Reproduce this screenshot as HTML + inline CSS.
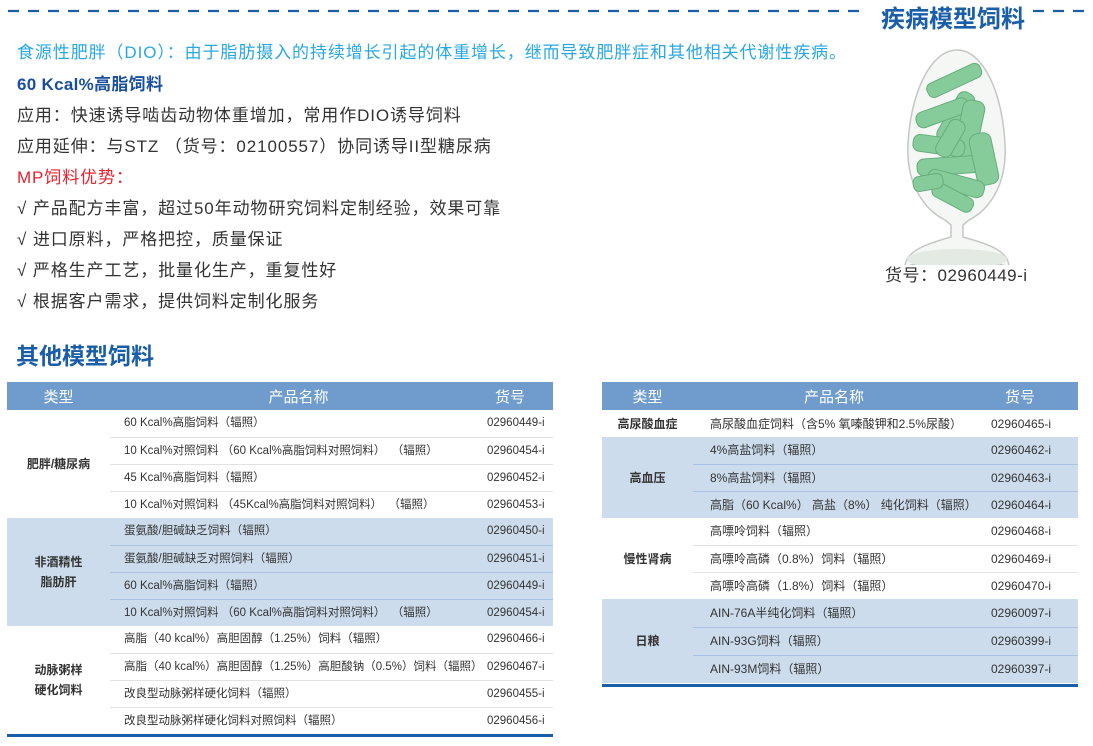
<!DOCTYPE html>
<html><head><meta charset="utf-8">
<style>
*{margin:0;padding:0;box-sizing:border-box}
body{width:1093px;height:746px;background:#fff;position:relative;overflow:hidden;font-family:"Liberation Sans","Noto Sans CJK SC",sans-serif;color:#333}
.a{position:absolute;white-space:nowrap}
.t{font-size:17px;line-height:20px;letter-spacing:0.9px}
table{position:absolute;border-collapse:collapse;table-layout:fixed;font-size:12px;color:#333}
th{background:#6f9ccd;color:#fff;font-weight:normal;font-size:15px;height:28px}
td{height:27px;padding:0;white-space:nowrap;vertical-align:middle;line-height:14px}
td.ty{text-align:center;font-weight:bold;font-size:12px;line-height:20px}
.b td{background:#cddcec}
.w td.s{border-bottom:1px solid #e2e2e2}
.b td.s{border-bottom:1px solid #a9c4e2}
#L{font-size:11.5px}
</style></head><body>
<svg class="a" style="left:0;top:0" width="1093" height="20"><line x1="8" y1="11" x2="868" y2="11" stroke="#1a5ea8" stroke-width="2.2" stroke-dasharray="11,9"/><line x1="1033" y1="11" x2="1085" y2="11" stroke="#1a5ea8" stroke-width="2.2" stroke-dasharray="11,9"/></svg>
<div class="a" style="left:881px;top:-1px;font-size:24px;font-weight:bold;color:#1a5ea8">疾病模型饲料</div>

<div class="a t" style="left:17px;top:43px;color:#29a8e0">食源性肥胖（DIO）：由于脂肪摄入的持续增长引起的体重增长，继而导致肥胖症和其他相关代谢性疾病。</div>
<div class="a t" style="left:17px;top:75px;color:#1a4f9c;font-weight:bold;letter-spacing:0.3px">60 Kcal%高脂饲料</div>
<div class="a t" style="left:17px;top:106px">应用：快速诱导啮齿动物体重增加，常用作DIO诱导饲料</div>
<div class="a t" style="left:17px;top:137px">应用延伸：与STZ （货号：02100557）协同诱导II型糖尿病</div>
<div class="a t" style="left:17px;top:168px;color:#e8202e">MP饲料优势：</div>
<div class="a t" style="left:17px;top:199px">√ 产品配方丰富，超过50年动物研究饲料定制经验，效果可靠</div>
<div class="a t" style="left:17px;top:230px">√ 进口原料，严格把控，质量保证</div>
<div class="a t" style="left:17px;top:261px">√ 严格生产工艺，批量化生产，重复性好</div>
<div class="a t" style="left:17px;top:292px">√ 根据客户需求，提供饲料定制化服务</div>
<div class="a" style="left:16px;top:337px;font-size:23px;font-weight:bold;color:#1a5ea8">其他模型饲料</div>

<svg class="a" style="left:895px;top:45px" width="125" height="220">
<path d="M62 5 C35 5 15 50 13 100 C11 140 30 165 50 175 L56 180 L56 192 C35 198 10 205 10 222 C30 214 94 214 114 222 C114 205 90 198 68 192 L68 180 L74 175 C94 165 112 140 110 100 C108 50 89 5 62 5Z" fill="#f5f7f5" stroke="#c4c8c4" stroke-width="1.5"/>
<ellipse cx="62" cy="214" rx="50" ry="10" fill="#e3e9e3"/>
<g fill="#86cc9a" stroke="#66ad7c" stroke-width="1">
<rect x="30" y="28" width="58" height="15" rx="6" transform="rotate(-25 59 35)"/>
<rect x="52" y="45" width="18" height="55" rx="7" transform="rotate(30 61 72)"/>
<rect x="20" y="60" width="55" height="16" rx="7" transform="rotate(-20 47 68)"/>
<rect x="62" y="55" width="22" height="72" rx="8" transform="rotate(12 73 91)"/>
<rect x="18" y="92" width="52" height="17" rx="7" transform="rotate(8 44 100)"/>
<rect x="35" y="85" width="40" height="17" rx="7" transform="rotate(-60 55 93)"/>
<rect x="22" y="112" width="72" height="17" rx="7" transform="rotate(-4 58 120)"/>
<rect x="78" y="88" width="22" height="52" rx="8" transform="rotate(-12 89 114)"/>
<rect x="32" y="130" width="58" height="17" rx="7" transform="rotate(15 61 138)"/>
<rect x="36" y="145" width="44" height="15" rx="6" transform="rotate(28 58 152)"/>
<rect x="18" y="130" width="30" height="15" rx="6" transform="rotate(-10 33 137)"/>
</g>
</svg>
<div class="a t" style="left:885px;top:266px;letter-spacing:0.5px">货号：02960449-i</div>

<table id="L" style="left:7px;top:382px;width:546px">
<colgroup><col style="width:103px"><col style="width:377px"><col style="width:66px"></colgroup>
<tr><th>类型</th><th>产品名称</th><th style="text-align:left;padding-left:8px">货号</th></tr>
<tbody class="w">
<tr><td class="ty" rowspan="4">肥胖/糖尿病</td><td class="s" style="padding-left:14px">60 Kcal%高脂饲料（辐照）</td><td class="s">02960449-i</td></tr>
<tr><td class="s" style="padding-left:14px">10 Kcal%对照饲料 （60 Kcal%高脂饲料对照饲料）&nbsp; （辐照）</td><td class="s">02960454-i</td></tr>
<tr><td class="s" style="padding-left:14px">45 Kcal%高脂饲料（辐照）</td><td class="s">02960452-i</td></tr>
<tr><td style="padding-left:14px">10 Kcal%对照饲料 （45Kcal%高脂饲料对照饲料）&nbsp; （辐照）</td><td>02960453-i</td></tr>
</tbody>
<tbody class="b">
<tr><td class="ty" rowspan="4">非酒精性<br>脂肪肝</td><td class="s" style="padding-left:14px">蛋氨酸/胆碱缺乏饲料（辐照）</td><td class="s">02960450-i</td></tr>
<tr><td class="s" style="padding-left:14px">蛋氨酸/胆碱缺乏对照饲料（辐照）</td><td class="s">02960451-i</td></tr>
<tr><td class="s" style="padding-left:14px">60 Kcal%高脂饲料（辐照）</td><td class="s">02960449-i</td></tr>
<tr><td style="padding-left:14px">10 Kcal%对照饲料 （60 Kcal%高脂饲料对照饲料）&nbsp; （辐照）</td><td>02960454-i</td></tr>
</tbody>
<tbody class="w">
<tr><td class="ty" rowspan="4">动脉粥样<br>硬化饲料</td><td class="s" style="padding-left:14px">高脂（40 kcal%）高胆固醇（1.25%）饲料（辐照）</td><td class="s">02960466-i</td></tr>
<tr><td class="s" style="padding-left:14px">高脂（40 kcal%）高胆固醇（1.25%）高胆酸钠（0.5%）饲料（辐照）</td><td class="s">02960467-i</td></tr>
<tr><td class="s" style="padding-left:14px">改良型动脉粥样硬化饲料（辐照）</td><td class="s">02960455-i</td></tr>
<tr><td style="padding-left:14px">改良型动脉粥样硬化饲料对照饲料（辐照）</td><td>02960456-i</td></tr>
</tbody>
</table>
<div class="a" style="left:7px;top:734px;width:546px;height:3px;background:#1a5ea8"></div>

<table style="left:602px;top:382px;width:476px">
<colgroup><col style="width:91px"><col style="width:282px"><col style="width:103px"></colgroup>
<tr><th>类型</th><th>产品名称</th><th style="text-align:left;padding-left:30px">货号</th></tr>
<tbody class="w"><tr><td class="ty">高尿酸血症</td><td style="padding-left:17px">高尿酸血症饲料（含5% 氧嗪酸钾和2.5%尿酸）</td><td style="padding-left:16px">02960465-i</td></tr></tbody>
<tbody class="b">
<tr><td class="ty" rowspan="3">高血压</td><td class="s" style="padding-left:17px">4%高盐饲料（辐照）</td><td class="s" style="padding-left:16px">02960462-i</td></tr>
<tr><td class="s" style="padding-left:17px">8%高盐饲料（辐照）</td><td class="s" style="padding-left:16px">02960463-i</td></tr>
<tr><td style="padding-left:17px">高脂（60 Kcal%） 高盐（8%） 纯化饲料（辐照）</td><td style="padding-left:16px">02960464-i</td></tr>
</tbody>
<tbody class="w">
<tr><td class="ty" rowspan="3">慢性肾病</td><td class="s" style="padding-left:17px">高嘌呤饲料（辐照）</td><td class="s" style="padding-left:16px">02960468-i</td></tr>
<tr><td class="s" style="padding-left:17px">高嘌呤高磷（0.8%）饲料（辐照）</td><td class="s" style="padding-left:16px">02960469-i</td></tr>
<tr><td style="padding-left:17px">高嘌呤高磷（1.8%）饲料（辐照）</td><td style="padding-left:16px">02960470-i</td></tr>
</tbody>
<tbody class="b">
<tr><td class="ty" rowspan="3">日粮</td><td class="s" style="padding-left:17px;height:28px">AIN-76A半纯化饲料（辐照）</td><td class="s" style="padding-left:16px">02960097-i</td></tr>
<tr><td class="s" style="padding-left:17px;height:28px">AIN-93G饲料（辐照）</td><td class="s" style="padding-left:16px">02960399-i</td></tr>
<tr><td style="padding-left:17px;height:28px">AIN-93M饲料（辐照）</td><td style="padding-left:16px">02960397-i</td></tr>
</tbody>
</table>
<div class="a" style="left:602px;top:684px;width:476px;height:3px;background:#1a5ea8"></div>
</body></html>
